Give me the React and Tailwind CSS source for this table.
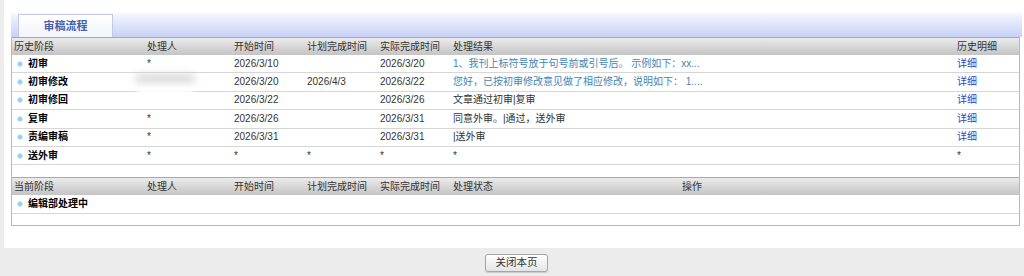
import React from "react";

const FONT = { fontFamily: '"Liberation Sans", "Noto Sans CJK SC", sans-serif' };

const cols = ["w-[133px]", "w-[87px]", "w-[73px]", "w-[73px]", "w-[73px]", "w-[504px]", "flex-1"];

const rows = [
  { stage: "初审", who: "*", start: "2026/3/10", plan: "", done: "2026/3/20", result: "1、我刊上标符号放于句号前或引号后。 示例如下：xx...", link: true, detail: "详细" },
  { stage: "初审修改", who: "", start: "2026/3/20", plan: "2026/4/3", done: "2026/3/22", result: "您好，已按初审修改意见做了相应修改，说明如下： 1....", link: true, detail: "详细", blur: true },
  { stage: "初审修回", who: "", start: "2026/3/22", plan: "", done: "2026/3/26", result: "文章通过初审|复审", detail: "详细" },
  { stage: "复审", who: "*", start: "2026/3/26", plan: "", done: "2026/3/31", result: "同意外审。|通过，送外审", detail: "详细" },
  { stage: "责编审稿", who: "*", start: "2026/3/31", plan: "", done: "2026/3/31", result: "|送外审", detail: "详细" },
  { stage: "送外审", who: "*", start: "*", plan: "*", done: "*", result: "*", detail: "*", star: true },
];

function Bullet() {
  return <span className="inline-block w-[6px] h-[6px] rounded-full bg-[#8fd0f0] border border-[#c8e8f8] mr-[5px] shrink-0" />;
}

function HeaderRow({ cells }) {
  return (
    <div className="flex h-[18px] items-center border-t border-[#a9a9a9] bg-gradient-to-b from-[#ebebeb] to-[#c4c4c4] text-[#333]">
      {cells.map((c, i) => (
        <div key={i} className={`${c.w} shrink-0 pl-[2px] whitespace-nowrap`}>{c.t}</div>
      ))}
    </div>
  );
}

export default function App() {
  return (
    <div className="w-[1024px] h-[276px] bg-[#ececec] flex flex-col text-[10px] leading-none" style={FONT}>
      <div className="ml-[4px] h-[248px] bg-white pl-[7px] pr-[4px] pt-[13px]">
        {/* tab bar */}
        <div className="h-[24px] bg-gradient-to-b from-[#f6f7fe] to-[#c8d1f6] flex items-end mr-[-2px]">
          <div className="ml-[7px] w-[95px] h-[23px] bg-gradient-to-b from-white to-[#f3f5fd] border-t border-l border-r border-[#c2c9e2] flex items-center justify-center text-[11px] font-bold text-[#4560ad]">
            审稿流程
          </div>
        </div>
        {/* table */}
        <div className="border-l border-r border-b border-[#b9b9b9] relative">
          <HeaderRow
            cells={[
              { w: cols[0], t: "历史阶段" },
              { w: cols[1], t: "处理人" },
              { w: cols[2], t: "开始时间" },
              { w: cols[3], t: "计划完成时间" },
              { w: cols[4], t: "实际完成时间" },
              { w: cols[5], t: "处理结果" },
              { w: cols[6], t: "历史明细" },
            ]}
          />
          {rows.map((r, i) => (
            <div key={i} className="flex h-[18.4px] items-center border-b border-[#d6d6d6] text-[#333]">
              <div className={`${cols[0]} shrink-0 pl-[5px] flex items-center font-bold text-black`}>
                <Bullet />
                {r.stage}
              </div>
              <div className={`${cols[1]} shrink-0 pl-[2px] relative`}>
                {r.who}
                {r.blur && (
                  <div className="absolute left-[-10px] top-[-7px] w-[60px] h-[7px] rounded-full bg-[#cfcfcf] blur-[4px]" />
                )}
                {r.blur && (
                  <div className="absolute left-[-8px] top-[6px] w-[56px] h-[6px] bg-white blur-[2px]" />
                )}
              </div>
              <div className={`${cols[2]} shrink-0 pl-[2px]`}>{r.start}</div>
              <div className={`${cols[3]} shrink-0 pl-[2px]`}>{r.plan}</div>
              <div className={`${cols[4]} shrink-0 pl-[2px]`}>{r.done}</div>
              <div className={`${cols[5]} shrink-0 pl-[2px] whitespace-nowrap ${r.link ? "text-[#4286b5]" : ""}`}>{r.result}</div>
              <div className={`${cols[6]} pl-[2px] ${r.star ? "" : "text-[#3343c6]"}`}>{r.detail}</div>
            </div>
          ))}
          <div className="h-[12px]" />
          <HeaderRow
            cells={[
              { w: cols[0], t: "当前阶段" },
              { w: cols[1], t: "处理人" },
              { w: cols[2], t: "开始时间" },
              { w: cols[3], t: "计划完成时间" },
              { w: cols[4], t: "实际完成时间" },
              { w: "w-[229px]", t: "处理状态" },
              { w: "flex-1", t: "操作" },
            ]}
          />
          <div className="flex h-[19px] items-center border-b border-[#d6d6d6]">
            <div className="pl-[5px] flex items-center font-bold text-black">
              <Bullet />
              编辑部处理中
            </div>
          </div>
          <div className="h-[11px]" />
        </div>
      </div>
      <div className="flex-1 flex items-center justify-center pl-[9px] pt-[1px]">
        <button className="w-[63px] h-[18px] rounded-[3px] border border-[#a6a6a6] bg-gradient-to-b from-white to-[#e4e4e4] text-[10.5px] text-[#333] shadow-[0_1px_1px_rgba(0,0,0,0.15)]">
          关闭本页
        </button>
      </div>
    </div>
  );
}
